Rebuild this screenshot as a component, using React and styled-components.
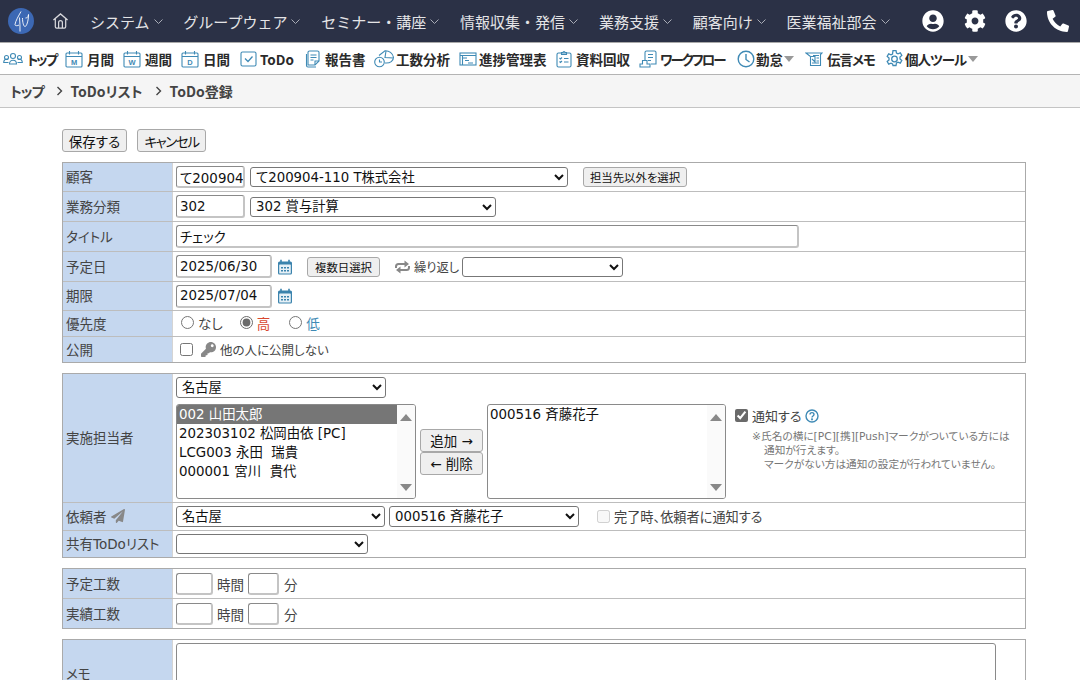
import styled, { createGlobalStyle, css } from 'styled-components'
import { FaUserCircle, FaCog, FaQuestionCircle, FaPhoneAlt, FaPaperPlane, FaKey } from 'react-icons/fa'

const BLUE = '#3f8ab5'
const FONT = `"DejaVu Sans", "Noto Sans CJK JP", sans-serif`

const Global = createGlobalStyle`
  html, body { margin: 0; height: 680px; overflow: hidden; background: #fff; }
  body { font-family: ${FONT}; font-size: 13.5px; color: #222; }
  * { box-sizing: border-box; font-feature-settings: "palt"; }
`

const NavBar = styled.header`
  height: 43px;
  background: #2b3146;
  border-bottom: 1px solid #a9a9a9;
  display: flex;
  align-items: center;
  padding: 0 0 0 8px;
  color: #e4e4e6;
`
const HomeLink = styled.span`
  display: flex;
  margin: 0 21px 0 18px;
`
const NavItem = styled.span`
  display: flex;
  align-items: center;
  gap: 4px;
  margin-right: 20.8px;
  font-family: "Noto Sans CJK JP", sans-serif;
  font-feature-settings: normal;
  font-size: 15px;
  white-space: nowrap;
`
const NavIcons = styled.div`
  display: flex;
  align-items: center;
  gap: 19.7px;
  margin-left: auto;
  padding-right: 11px;
  color: #fff;
  font-size: 22px;
  svg { display: block; }
`
const ToolBar = styled.nav`
  height: 32px;
  border-bottom: 1px solid #b4b4b4;
  display: flex;
  align-items: center;
  padding-left: 3px;
`
const Tool = styled.span`
  display: flex;
  flex: none;
  align-items: center;
  gap: ${p => p.$inner ?? 3}px;
  width: ${p => p.$w}px;
  font-family: "Noto Sans CJK JP", sans-serif;
  font-size: 13.5px;
  font-weight: 700;
  color: #2a2a2a;
  white-space: nowrap;
  svg { flex: none; }
`
const ToolText = styled.span`
  letter-spacing: ${p => p.$ls ?? 0}px;
`
const Caret = styled.i`
  flex: none;
  width: 0;
  height: 0;
  margin-left: 0;
  border-left: 5.5px solid transparent;
  border-right: 5.5px solid transparent;
  border-top: 6px solid #999;
`
const Crumbs = styled.div`
  height: 33px;
  background: #f5f5f5;
  border-bottom: 1px solid #c4c4c4;
  display: flex;
  align-items: center;
  padding-left: 10px;
  font-family: "Noto Sans CJK JP", sans-serif;
  font-size: 14px;
  font-weight: 700;
  color: #444;
`
const CrumbTop = styled.span`
  letter-spacing: -1px;
`
const CrumbSep = styled.span`
  display: flex;
  margin: 0 7px 0 12px;
`
const Content = styled.main`
  padding: 21px 54px 0 62px;
`
const Actions = styled.div`
  display: flex;
  gap: 10px;
  margin-bottom: 10px;
`
const controlFont = css`
  font-family: ${FONT};
  color: #111;
`
const Button = styled.button`
  ${controlFont}
  flex: none;
  width: ${p => p.$w}px;
  height: ${p => p.$h ?? 23}px;
  margin-left: ${p => p.$ml ?? 0}px;
  padding: 0;
  font-size: ${p => p.$size ?? 13.5}px;
  letter-spacing: ${p => p.$ls ?? 0}px;
  background: #efefef;
  border: 1px solid #a8a8a8;
  border-radius: 3px;
  white-space: nowrap;
`
const Table = styled.section`
  border: 1px solid #aaa;
  margin-bottom: 10px;
`
const Row = styled.div`
  display: grid;
  grid-template-columns: 109px 1fr;
  grid-template-rows: minmax(0, 1fr);
  height: ${p => p.$h}px;
  & + & { border-top: 1px solid #bdbdbd; }
`
const Label = styled.div`
  display: flex;
  align-items: center;
  gap: 4px;
  padding: 0 0 2px 3px;
  background: #c5d7ef;
  color: #444;
  font-size: 13.5px;
  white-space: nowrap;
  svg { color: #888; }
`
const Cell = styled.div`
  display: flex;
  align-items: center;
  border-left: 1px solid #d4d4d4;
  padding-left: 3px;
`
const TextInput = styled.input`
  ${controlFont}
  width: ${p => p.$w}px;
  height: ${p => p.$h ?? 22}px;
  margin: 0;
  padding: 0 0 0 3px;
  font-size: 13.4px;
  border: solid #8a8a8a;
  border-width: 1px 2px 2px 1px;
  border-right-color: #c4c4c4;
  border-bottom-color: #c4c4c4;
  border-radius: 3px;
  background: #fff;
`
const Select = styled.select`
  ${controlFont}
  width: ${p => p.$w}px;
  height: ${p => p.$h ?? 20}px;
  margin: 0 0 0 ${p => p.$ml ?? 0}px;
  padding: 0 0 0 1px;
  font-size: 13.3px;
  border: 1px solid #777;
  border-radius: 3px;
  background: #fff;
`
const DateIcon = styled.span`
  display: flex;
  margin-left: 6px;
`
const Radio = styled.label`
  display: flex;
  align-items: center;
  gap: 4px;
  margin-right: ${p => p.$gap}px;
  padding-bottom: 2px;
  color: ${p => p.$color ?? '#444'};
  font-size: 13.5px;
  input { margin: 0; width: 13px; height: 13px; accent-color: #6a6a6a; }
`
const RadioGroup = styled.div`
  display: flex;
  padding-left: 5px;
`
const CheckLine = styled.label`
  display: flex;
  align-items: center;
  margin-left: ${p => p.$ml ?? 0}px;
  gap: ${p => p.$gap ?? 4}px;
  color: ${p => p.$color ?? '#444'};
  font-size: ${p => p.$size ?? 12.5}px;
  white-space: nowrap;
  input { margin: 0; width: 13px; height: 13px; accent-color: #6a6a6a; }
  svg { flex: none; }
`
const KeyMark = styled(FaKey)`
  margin-left: 4px;
  color: #888;
`
const Assign = styled.div`
  display: flex;
  flex-direction: column;
  justify-content: center;
  gap: 6px;
`
const Pickers = styled.div`
  display: flex;
  align-items: stretch;
`
const ListBox = styled.div`
  display: flex;
  width: ${p => p.$w}px;
  height: 95px;
  border: 1px solid #8a8a8a;
  border-radius: 3px;
  overflow: hidden;
  font-size: 13.4px;
  color: #111;
`
const Options = styled.div`
  flex: 1;
`
const Option = styled.div`
  height: 19px;
  line-height: 19px;
  padding-left: 2px;
  white-space: nowrap;
  background: ${p => p.$on ? '#767676' : 'transparent'};
  color: ${p => p.$on ? '#fff' : '#111'};
`
const Track = styled.div`
  width: 18px;
  background: #fafafa;
  display: flex;
  flex-direction: column;
  justify-content: space-between;
  align-items: center;
  padding: 9px 0 7px;
`
const Arrow = styled.i`
  width: 0;
  height: 0;
  border-left: 6px solid transparent;
  border-right: 6px solid transparent;
  ${p => p.$up ? 'border-bottom: 7px solid #888;' : 'border-top: 7px solid #888;'}
`
const Shuttle = styled.div`
  display: flex;
  flex-direction: column;
  justify-content: center;
  width: 63px;
  margin: 0 4px;
  button { width: 63px; font-size: 13.5px; }
`
const Notify = styled.div`
  margin-left: 9px;
  padding-top: 2px;
`
const Note = styled.p`
  margin: 5px 0 0 17px;
  font-size: 10.7px;
  line-height: 14px;
  color: #777;
  white-space: nowrap;
  span { display: block; padding-left: 12px; }
`
const Unit = styled.span`
  margin: 0 ${p => p.$r ?? 4}px 0 ${p => p.$l ?? 4}px;
  color: #444;
  font-size: 13.5px;
`
const Memo = styled.textarea`
  width: 820px;
  height: 61px;
  margin: 3px 0 0;
  border: 1px solid #8a8a8a;
  border-radius: 3px;
  resize: none;
  display: block;
`
const MemoCell = styled(Cell)`
  align-items: flex-start;
`

const Logo = () => (
  <svg width="26" height="26" viewBox="0 0 26 26">
    <circle cx="13" cy="13" r="13" fill="#3c68b4" />
    <path d="M13 3.500C10.500 8 7.500 13 7 16.500c-.2 1.500 2.500 1.500 4 .5M11.500 9.500c.5 5 .5 9 .5 14M14.500 10c0 4 1 8.500 2.500 8.500S20.500 13 20.500 6.500c0 3-2 3.500-3 3.500" fill="none" stroke="#fff" strokeWidth=".9" />
  </svg>
)
const Home = () => (
  <svg width="17" height="18" viewBox="0 0 18 18" fill="none" stroke="#d8d8dc" strokeWidth="1.3">
    <path d="M1.500 8 9 1.500 16.500 8M3.500 6.500V15a1.500 1.500 0 0 0 1.500 1.500h8a1.500 1.500 0 0 0 1.500-1.500V6.500" />
    <path d="M7 16.500V10.500a2 2 0 0 1 4 0v6" />
  </svg>
)
const Chevron = ({ color = '#a9acb6', size = 9 }) => (
  <svg width={size} height={size} viewBox="0 0 9 9" fill="none" stroke={color} strokeWidth="1">
    <path d="M.5 2.500 4.500 6.500 8.500 2.500" />
  </svg>
)
const CrumbArrow = () => (
  <svg width="8" height="10" viewBox="0 0 8 10" fill="none" stroke="#444" strokeWidth="1.400">
    <path d="M1.500 1 5.500 5 1.500 9" />
  </svg>
)
const RepeatIcon = () => (
  <svg width="17" height="14" viewBox="0 0 17 14" fill="none" stroke="#888" strokeWidth="2">
    <path d="M2 8V6.500A2.500 2.500 0 0 1 4.500 4H11" />
    <path d="M15 6v1.500A2.500 2.500 0 0 1 12.500 10H6" />
    <path d="M10.500 0.500 15 4l-4.500 3.500zM6.500 6.500 2 10l4.500 3.500z" fill="#888" stroke="none" />
  </svg>
)
const ToolSvg = ({ w = 18, children }) => (
  <svg width={w} height="18" viewBox={`0 0 ${w} 18`} fill="none" stroke={BLUE} strokeWidth="1.100">{children}</svg>
)
const CalIcon = ({ letter }) => (
  <ToolSvg>
    <rect x="1" y="3" width="16" height="14" rx="1" />
    <path d="M1 6.500h16M4.500 1v3.500M13.500 1v3.500" />
    <text x="9" y="14.500" fontSize="7.500" fontWeight="700" fill={BLUE} stroke="none" textAnchor="middle" fontFamily="Liberation Sans">{letter}</text>
  </ToolSvg>
)
const DateCal = () => (
  <svg width="14" height="16" viewBox="0 0 14 16">
    <path d="M0 4a1.500 1.500 0 0 1 1.500-1.500h11A1.500 1.500 0 0 1 14 4v2H0z" fill="#3a83ad" />
    <rect x=".6" y="5" width="12.800" height="10" rx="1" fill="#e6f0f6" stroke="#3a83ad" strokeWidth="1.200" />
    <path d="M3 .8v3M11 .8v3" stroke="#3a83ad" strokeWidth="1.600" />
    <path d="M3 8h2v1.500H3zM6 8h2v1.500H6zM9 8h2v1.500H9zM3 11h2v1.500H3zM6 11h2v1.500H6zM9 11h2v1.500H9z" fill="#3a83ad" />
  </svg>
)
const PeopleIcon = () => (
  <ToolSvg w={20}>
    <circle cx="10" cy="6" r="2.500" /><circle cx="3.500" cy="7.500" r="2" /><circle cx="16.500" cy="7.500" r="2" />
    <path d="M6.500 14c0-5 7-5 7 0zM5.500 12.500H.7c0-3 2-3.500 4-3.500M14.500 12.500h4.800c0-3-2-3.500-4-3.500" />
  </ToolSvg>
)
const CheckIcon = () => (
  <ToolSvg w={17}>
    <rect x="1" y="2" width="15" height="14" rx="1.500" />
    <path d="M5 8.500 8 11.500 12.500 6.500" strokeWidth="1.300" />
  </ToolSvg>
)
const ReportIcon = () => (
  <ToolSvg w={17}>
    <path d="M3 15V2.500A1.500 1.500 0 0 1 4.500 1h8A1.500 1.500 0 0 1 14 2.500V11l-4 4z" />
    <path d="M5.500 5h6M5.500 7.500h6M5.500 10h3M14 11h-4v4M1.500 4v11.500A1.500 1.500 0 0 0 3 17h8" />
  </ToolSvg>
)
const PieIcon = () => (
  <ToolSvg w={21}>
    <circle cx="5.500" cy="12" r="4.800" /><path d="M5.500 9.500V12h2.500" />
    <path d="M5 5.500 11 .8a8 8 0 0 1 8.500 6.500c0 3.500-3 6.200-8.500 5.700M12 1l-1 6.500 8.500.5" />
  </ToolSvg>
)
const BoardIcon = () => (
  <ToolSvg>
    <rect x="1" y="3" width="16" height="12" /><path d="M1 5.500h16M3.500 8H8M6 10.500h4M9 13h5M3.500 5.500V15" />
  </ToolSvg>
)
const ClipIcon = () => (
  <ToolSvg w={16}>
    <rect x="1" y="3" width="14" height="14" rx="1.500" />
    <path d="M5.500 3.500V2.500H7a1 1 0 0 1 2 0h1.500v2h-5zM3.500 8l1 1 1.500-1.500M8 8.500h4.500M3.500 11.500l1 1 1.500-1.500M8 12h4.500" />
  </ToolSvg>
)
const FlowIcon = () => (
  <ToolSvg>
    <path d="M6 11V2.500A1.500 1.500 0 0 1 7.500 1h8A1.500 1.500 0 0 1 17 2.500V14h-5M9 4.500h5M9 7.500h5M9 10.500h3" />
    <path d="M3.500 10.500h4.500v3.500H11V17H1v-3h2.500z" />
  </ToolSvg>
)
const ClockIcon = () => (
  <ToolSvg>
    <circle cx="9" cy="9" r="7.800" strokeWidth="1.400" /><path d="M9 4v5.500l3.500 2.500" strokeWidth="1.400" />
  </ToolSvg>
)
const MemoIcon = () => (
  <ToolSvg>
    <path d="M1 3h16l-1.500 1.500V15.500H5.500V6.500zM5.500 6.500H10V12L7 9M8 5.500h6M11.500 8H14M11.500 11H14M7 13h7" />
  </ToolSvg>
)
const GearIcon = () => (
  <ToolSvg w={17}>
    <g transform="translate(-.5 -.5)">
      <path d="M7.500 1h3l.5 2.500 1.500.800 2.300-1 1.500 2.600-1.800 1.600v1.900l1.800 1.600-1.500 2.600-2.300-1-1.500.800-.5 2.600h-3L7 14.400l-1.500-.800-2.300 1L1.700 12 3.500 10.400V8.500L1.700 6.900 3.200 4.300l2.300 1L7 4.500z" strokeWidth="1.300" />
      <circle cx="9" cy="9.500" r="2.800" strokeWidth="1.300" />
    </g>
  </ToolSvg>
)
const HelpIcon = () => (
  <svg width="14" height="14" viewBox="0 0 14 14" fill="none" stroke={BLUE} strokeWidth="1.400">
    <circle cx="7" cy="7" r="6" />
    <path d="M5 5.500C5 3 9 3 9 5.500 9 7 7 7 7 8.500" />
    <circle cx="7" cy="10.300" r=".4" fill={BLUE} />
  </svg>
)

const menus = ['システム', 'グループウェア', 'セミナー・講座', '情報収集・発信', '業務支援', '顧客向け', '医業福祉部会']

const tools = [
  { icon: <PeopleIcon />, label: 'トップ', w: 62, inner: 4, ls: -2 },
  { icon: <CalIcon letter="M" />, label: '月間', w: 58, inner: 4 },
  { icon: <CalIcon letter="W" />, label: '週間', w: 58, inner: 4 },
  { icon: <CalIcon letter="D" />, label: '日間', w: 59, inner: 4 },
  { icon: <CheckIcon />, label: 'ToDo', w: 65 },
  { icon: <ReportIcon />, label: '報告書', w: 69 },
  { icon: <PieIcon />, label: '工数分析', w: 85, inner: 1 },
  { icon: <BoardIcon />, label: '進捗管理表', w: 97, inner: 2 },
  { icon: <ClipIcon />, label: '資料回収', w: 83, inner: 4 },
  { icon: <FlowIcon />, label: 'ワークフロー', w: 98, inner: 3, ls: -2 },
  { icon: <ClockIcon />, label: '勤怠', w: 68, inner: 1, caret: true },
  { icon: <MemoIcon />, label: '伝言メモ', w: 81, inner: 4, ls: -1 },
  { icon: <GearIcon />, label: '個人ツール', w: 95, inner: 2, caret: true, ls: -1 },
]

function App() {
  return (
    <>
      <Global />
      <NavBar>
        <Logo />
        <HomeLink><Home /></HomeLink>
        {menus.map(m => (
          <NavItem key={m}>{m}<Chevron /></NavItem>
        ))}
        <NavIcons>
          <FaUserCircle />
          <FaCog />
          <FaQuestionCircle />
          <FaPhoneAlt />
        </NavIcons>
      </NavBar>
      <ToolBar>
        {tools.map(t => (
          <Tool key={t.label} $w={t.w} $inner={t.inner}>
            {t.icon}<ToolText $ls={t.ls}>{t.label}</ToolText>{t.caret && <Caret />}
          </Tool>
        ))}
      </ToolBar>
      <Crumbs>
        <CrumbTop>トップ</CrumbTop>
        <CrumbSep><CrumbArrow /></CrumbSep>
        <span>ToDoリスト</span>
        <CrumbSep><CrumbArrow /></CrumbSep>
        <span>ToDo登録</span>
      </Crumbs>
      <Content>
        <Actions>
          <Button $w={65}>保存する</Button>
          <Button $w={69} $ls={-1.4}>キャンセル</Button>
        </Actions>
        <Table>
          <Row $h={28}>
            <Label>顧客</Label>
            <Cell>
              <TextInput $w={69} defaultValue="て200904" />
              <Select $w={318} $ml={5}><option>て200904-110 T株式会社</option></Select>
              <Button $w={104} $h={20} $size={11.4} $ml={15}>担当先以外を選択</Button>
            </Cell>
          </Row>
          <Row $h={30}>
            <Label>業務分類</Label>
            <Cell>
              <TextInput $w={69} $h={23} defaultValue="302" />
              <Select $w={246} $ml={5}><option>302 賞与計算</option></Select>
            </Cell>
          </Row>
          <Row $h={30}>
            <Label>タイトル</Label>
            <Cell><TextInput $w={623} $h={23} defaultValue="チェック" /></Cell>
          </Row>
          <Row $h={30}>
            <Label>予定日</Label>
            <Cell>
              <TextInput $w={96} $h={23} defaultValue="2025/06/30" />
              <DateIcon><DateCal /></DateIcon>
              <Button $w={73} $h={20} $size={11.4} $ml={15}>複数日選択</Button>
              <CheckLine $ml={14} $size={12.3} $gap={3}><RepeatIcon />繰り返し</CheckLine>
              <Select $w={161} $ml={3}><option></option></Select>
            </Cell>
          </Row>
          <Row $h={29}>
            <Label>期限</Label>
            <Cell>
              <TextInput $w={96} $h={23} defaultValue="2025/07/04" />
              <DateIcon><DateCal /></DateIcon>
            </Cell>
          </Row>
          <Row $h={26}>
            <Label>優先度</Label>
            <Cell>
              <RadioGroup>
                <Radio $gap={17}><input type="radio" name="p" />なし</Radio>
                <Radio $gap={19} $color="#d9482f"><input type="radio" name="p" defaultChecked />高</Radio>
                <Radio $gap={0} $color={BLUE}><input type="radio" name="p" />低</Radio>
              </RadioGroup>
            </Cell>
          </Row>
          <Row $h={26}>
            <Label>公開</Label>
            <Cell>
              <CheckLine $ml={4}><input type="checkbox" /><KeyMark size={15} />他の人に公開しない</CheckLine>
            </Cell>
          </Row>
        </Table>
        <Table>
          <Row $h={128}>
            <Label>実施担当者</Label>
            <Cell>
              <Assign>
                <Select $w={210} $h={21}><option>名古屋</option></Select>
                <Pickers>
                  <ListBox $w={240}>
                    <Options>
                      <Option $on>002 山田太郎</Option>
                      <Option>202303102 松岡由依 [PC]</Option>
                      <Option>LCG003 永田&nbsp;&nbsp;瑞貴</Option>
                      <Option>000001 宮川&nbsp;&nbsp;貴代</Option>
                    </Options>
                    <Track><Arrow $up /><Arrow /></Track>
                  </ListBox>
                  <Shuttle>
                    <Button>追加 →</Button>
                    <Button>← 削除</Button>
                  </Shuttle>
                  <ListBox $w={239}>
                    <Options>
                      <Option>000516 斉藤花子</Option>
                    </Options>
                    <Track><Arrow $up /><Arrow /></Track>
                  </ListBox>
                  <Notify>
                    <CheckLine $size={13}><input type="checkbox" defaultChecked />通知する<HelpIcon /></CheckLine>
                    <Note>
                      ※氏名の横に[PC][携][Push]マークがついている方には
                      <span>通知が行えます。</span>
                      <span>マークがない方は通知の設定が行われていません。</span>
                    </Note>
                  </Notify>
                </Pickers>
              </Assign>
            </Cell>
          </Row>
          <Row $h={28}>
            <Label>依頼者<FaPaperPlane size={14} /></Label>
            <Cell>
              <Select $w={209} $h={21}><option>名古屋</option></Select>
              <Select $w={190} $h={21} $ml={4}><option>000516 斉藤花子</option></Select>
              <CheckLine $ml={18} $size={13.2}><input type="checkbox" disabled />完了時、依頼者に通知する</CheckLine>
            </Cell>
          </Row>
          <Row $h={27}>
            <Label>共有ToDoリスト</Label>
            <Cell><Select $w={192}><option></option></Select></Cell>
          </Row>
        </Table>
        <Table>
          <Row $h={29}>
            <Label>予定工数</Label>
            <Cell>
              <TextInput $w={37} />
              <Unit>時間</Unit>
              <TextInput $w={31} />
              <Unit $l={5}>分</Unit>
            </Cell>
          </Row>
          <Row $h={30}>
            <Label>実績工数</Label>
            <Cell>
              <TextInput $w={37} />
              <Unit>時間</Unit>
              <TextInput $w={31} />
              <Unit $l={5}>分</Unit>
            </Cell>
          </Row>
        </Table>
        <Table>
          <Row $h={68}>
            <Label>メモ</Label>
            <MemoCell><Memo /></MemoCell>
          </Row>
        </Table>
      </Content>
    </>
  )
}

export default App
